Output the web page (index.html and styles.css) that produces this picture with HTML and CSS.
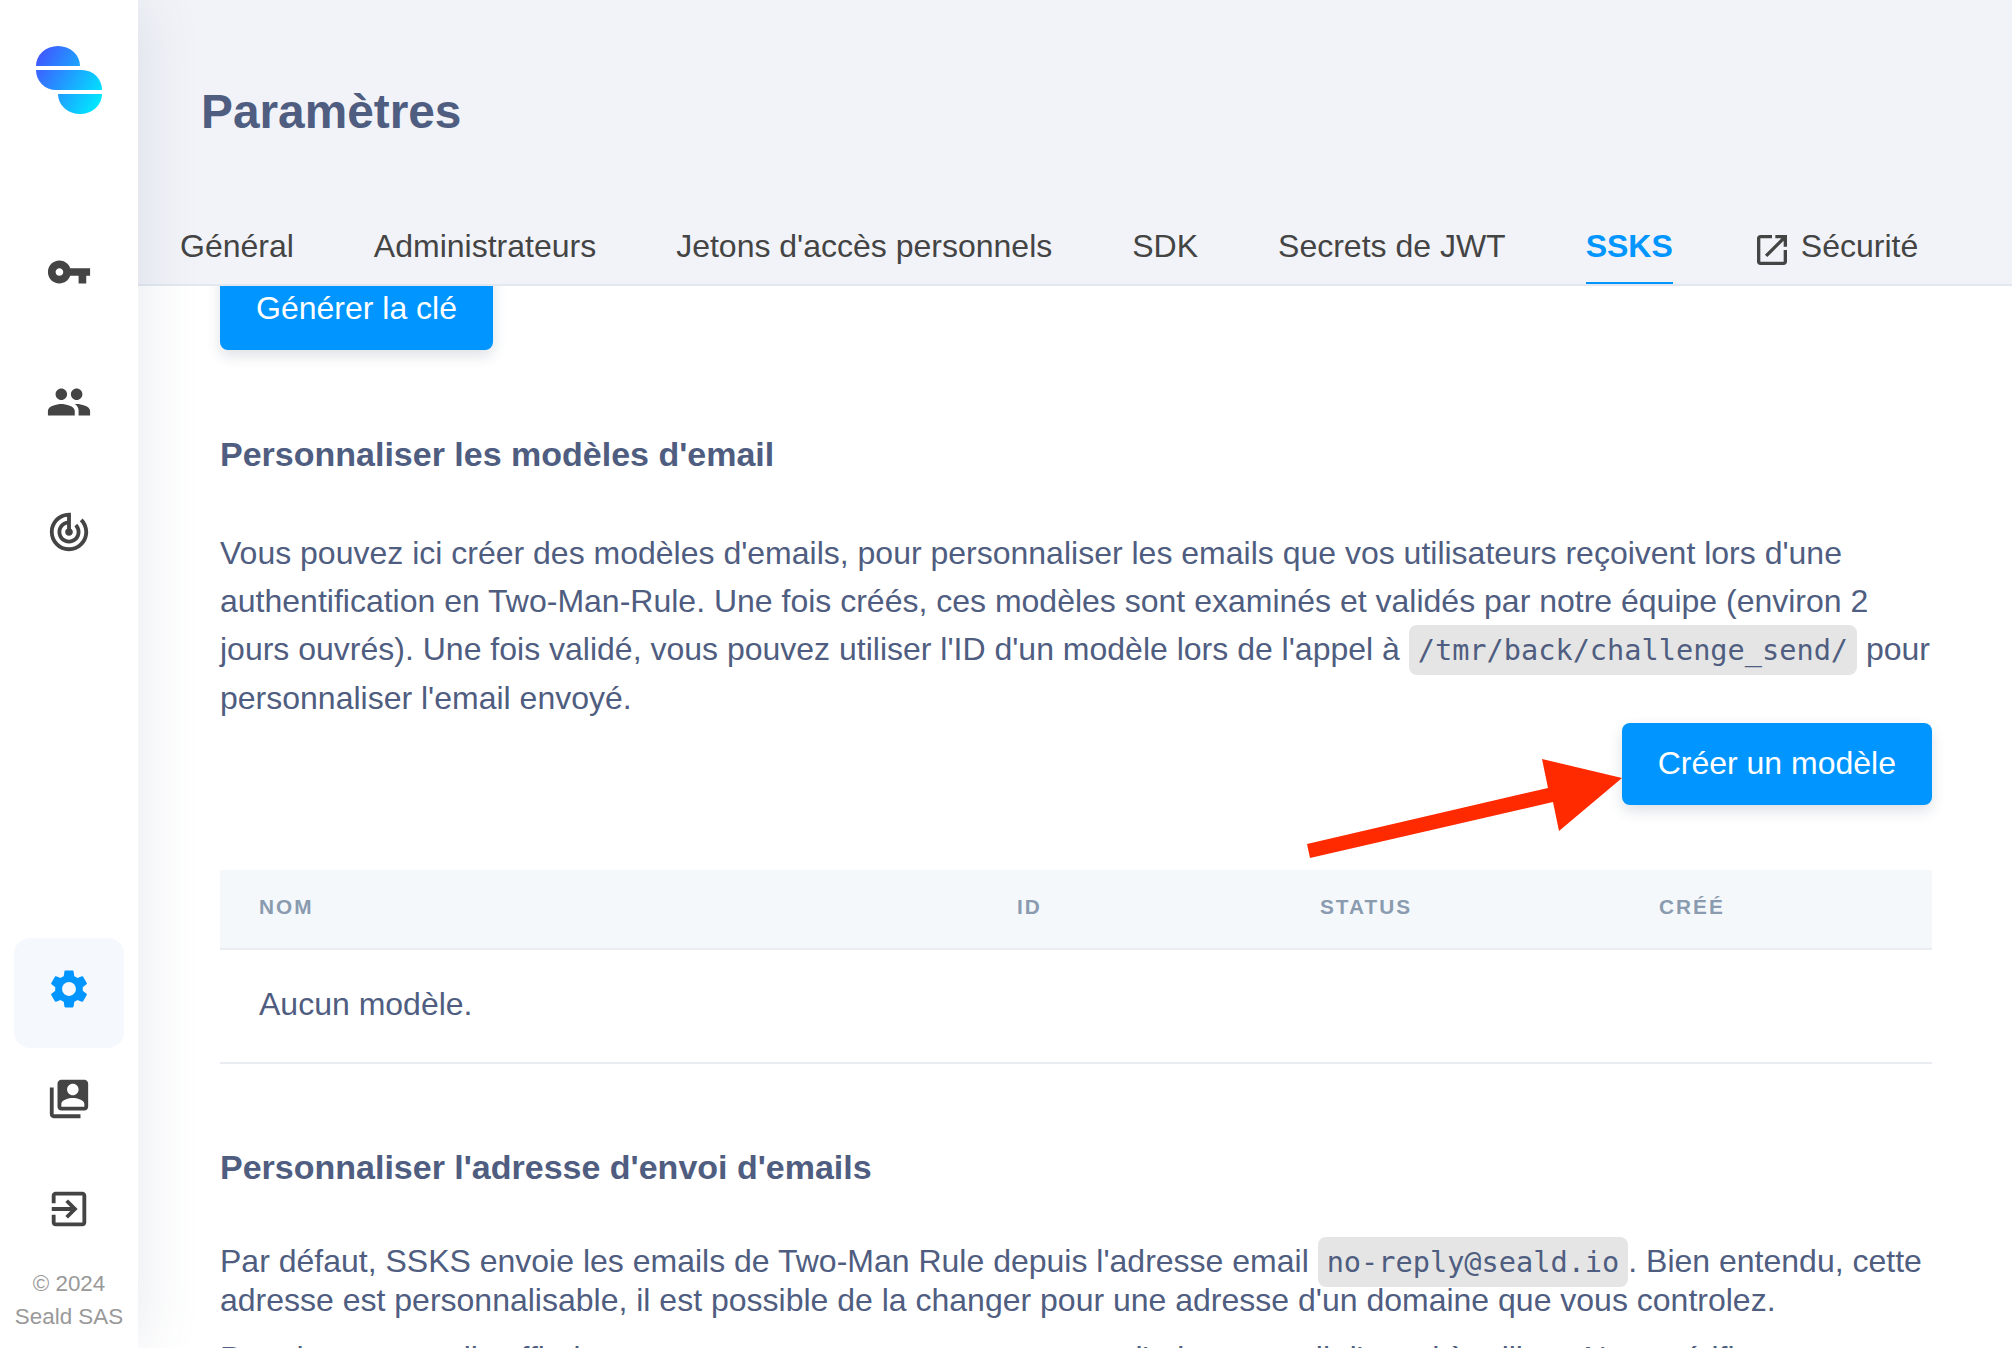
FILE: index.html
```html
<!DOCTYPE html>
<html lang="fr">
<head>
<meta charset="utf-8">
<title>Paramètres</title>
<link rel="stylesheet" href="styles.css">
</head>
<body>
<div class="app">
  <aside class="sidebar">
    <div class="logo">
      <svg width="66" height="68" viewBox="0 0 66 68">
        <defs>
          <linearGradient id="lg" gradientUnits="userSpaceOnUse" x1="0" y1="14" x2="66" y2="50">
            <stop offset="0" stop-color="#4058ff"/>
            <stop offset="0.5" stop-color="#1f9fff"/>
            <stop offset="1" stop-color="#00e6ff"/>
          </linearGradient>
        </defs>
        <path fill="url(#lg)" d="M0 20A22 20 0 0 1 44 20ZM0 24H46A20 20 0 0 1 66 44H20A20 20 0 0 1 0 24ZM22 48H66A22 20 0 0 1 22 48Z"/>
      </svg>
    </div>
    <nav class="nav nav-top">
      <a class="nav-item"><svg class="icon" viewBox="0 0 24 24"><path d="M12.65 10C11.83 7.67 9.61 6 7 6c-3.31 0-6 2.69-6 6s2.69 6 6 6c2.61 0 4.83-1.67 5.65-4H17v4h4v-4h2v-4H12.65zM7 14c-1.1 0-2-.9-2-2s.9-2 2-2 2 .9 2 2-.9 2-2 2z"/></svg></a>
      <a class="nav-item"><svg class="icon" viewBox="0 0 24 24"><path d="M16 11c1.66 0 2.99-1.34 2.99-3S17.66 5 16 5c-1.66 0-3 1.34-3 3s1.34 3 3 3zm-8 0c1.66 0 2.99-1.34 2.99-3S9.66 5 8 5C6.34 5 5 6.34 5 8s1.34 3 3 3zm0 2c-2.33 0-7 1.17-7 3.5V19h14v-2.5c0-2.33-4.67-3.5-7-3.5zm8 0c-.29 0-.62.02-.97.05 1.16.84 1.97 1.97 1.97 3.45V19h6v-2.5c0-2.33-4.67-3.5-7-3.5z"/></svg></a>
      <a class="nav-item"><svg class="icon" viewBox="0 0 24 24"><path d="M19.07 4.93l-1.41 1.41C19.1 7.79 20 9.79 20 12c0 4.42-3.58 8-8 8s-8-3.58-8-8c0-4.08 3.05-7.44 7-7.93v2.02C8.16 6.57 6 9.03 6 12c0 3.31 2.69 6 6 6s6-2.69 6-6c0-1.66-.67-3.16-1.76-4.24l-1.41 1.41C15.55 9.9 16 10.9 16 12c0 2.21-1.79 4-4 4s-4-1.79-4-4c0-1.86 1.28-3.41 3-3.86v2.14c-.6.35-1 .98-1 1.72 0 1.1.9 2 2 2s2-.9 2-2c0-.74-.4-1.38-1-1.72V2h-1C6.48 2 2 6.48 2 12s4.48 10 10 10 10-4.48 10-10c0-2.76-1.12-5.26-2.93-7.07z"/></svg></a>
    </nav>
    <nav class="nav nav-bottom">
      <a class="nav-item active"><svg class="icon" viewBox="0 0 24 24"><path d="M19.14,12.94c0.04-0.3,0.06-0.61,0.06-0.94c0-0.32-0.02-0.64-0.07-0.94l2.03-1.58c0.18-0.14,0.23-0.41,0.12-0.61 l-1.92-3.32c-0.12-0.22-0.37-0.29-0.59-0.22l-2.39,0.96c-0.5-0.38-1.03-0.7-1.62-0.94L14.4,2.81c-0.04-0.24-0.24-0.41-0.48-0.41 h-3.84c-0.24,0-0.43,0.17-0.47,0.41L9.25,5.35C8.66,5.59,8.12,5.92,7.63,6.29L5.24,5.33c-0.22-0.08-0.47,0-0.59,0.22L2.74,8.87 C2.62,9.08,2.66,9.34,2.86,9.48l2.03,1.58C4.84,11.36,4.8,11.69,4.8,12s0.02,0.64,0.07,0.94l-2.03,1.58 c-0.18,0.14-0.23,0.41-0.12,0.61l1.92,3.32c0.12,0.22,0.37,0.29,0.59,0.22l2.39-0.96c0.5,0.38,1.03,0.7,1.62,0.94l0.36,2.54 c0.05,0.24,0.24,0.41,0.48,0.41h3.84c0.24,0,0.44-0.17,0.47-0.41l0.36-2.54c0.59-0.24,1.13-0.56,1.62-0.94l2.39,0.96 c0.22,0.08,0.47,0,0.59-0.22l1.92-3.32c0.12-0.22,0.07-0.47-0.12-0.61L19.14,12.94z M12,15.6c-1.98,0-3.6-1.62-3.6-3.6 s1.62-3.6,3.6-3.6s3.6,1.62,3.6,3.6S13.98,15.6,12,15.6z"/></svg></a>
      <a class="nav-item"><svg class="icon" viewBox="0 0 24 24"><path fill-rule="evenodd" d="M4 6H2v14c0 1.1.9 2 2 2h14v-2H4V6zm16-4H8c-1.1 0-2 .9-2 2v12c0 1.1.9 2 2 2h12c1.1 0 2-.9 2-2V4c0-1.1-.9-2-2-2zm-6 2c1.66 0 3 1.34 3 3s-1.34 3-3 3-3-1.34-3-3 1.34-3 3-3zm6 12H8v-1.5c0-1.99 4-3 6-3s6 1.01 6 3V16z"/></svg></a>
      <a class="nav-item"><svg class="icon" viewBox="0 0 24 24"><path d="M10.09 15.59L11.5 17l5-5-5-5-1.41 1.41L12.67 11H3v2h9.67l-2.58 2.59zM19 3H5c-1.11 0-2 .9-2 2v4h2V5h14v14H5v-4H3v4c0 1.1.89 2 2 2h14c1.1 0 2-.9 2-2V5c0-1.1-.9-2-2-2z"/></svg></a>
    </nav>
    <div class="copyright">© 2024<br>Seald SAS</div>
  </aside>

  <main class="main">
    <header class="header">
      <h1 class="title">Paramètres</h1>
      <div class="tabs">
        <a class="tab">Général</a>
        <a class="tab">Administrateurs</a>
        <a class="tab">Jetons d'accès personnels</a>
        <a class="tab">SDK</a>
        <a class="tab">Secrets de JWT</a>
        <a class="tab tab-active">SSKS</a>
        <a class="tab tab-icon"><svg class="tab-svg" viewBox="0 0 24 24"><path d="M19 19H5V5h7V3H5c-1.11 0-2 .9-2 2v14c0 1.1.89 2 2 2h14c1.1 0 2-.9 2-2v-7h-2v7zM14 3v2h3.59l-9.83 9.83 1.41 1.41L19 6.41V10h2V3h-7z"/></svg>Sécurité</a>
      </div>
    </header>
    <div class="scroll">
      <div class="content">
        <button class="btn">Générer la clé</button>
        <h3 class="section-title first">Personnaliser les modèles d'email</h3>
        <p class="para">Vous pouvez ici créer des modèles d'emails, pour personnaliser les emails que vos utilisateurs reçoivent lors d'une authentification en Two-Man-Rule. Une fois créés, ces modèles sont examinés et validés par notre équipe (environ 2 jours ouvrés). Une fois validé, vous pouvez utiliser l'ID d'un modèle lors de l'appel à <code class="code">/tmr/back/challenge_send/</code> pour personnaliser l'email envoyé.</p>
        <div class="actions">
          <button class="btn">Créer un modèle</button>
          <svg class="arrow" width="320" height="104" viewBox="0 0 320 104"><polygon fill="#ff2a00" points="0,89 241,33 235,4 315,23 252,76 246,47 3,103"/></svg>
        </div>
        <table class="table">
          <colgroup><col class="c1"><col class="c2"><col class="c3"><col class="c4"></colgroup>
          <thead><tr><th>Nom</th><th>ID</th><th>Status</th><th>Créé</th></tr></thead>
          <tbody><tr><td colspan="4">Aucun modèle.</td></tr></tbody>
        </table>
        <h3 class="section-title second">Personnaliser l'adresse d'envoi d'emails</h3>
        <p class="para tight">Par défaut, SSKS envoie les emails de Two-Man Rule depuis l'adresse email <code class="code">no-reply@seald.io</code>. Bien entendu, cette adresse est personnalisable, il est possible de la changer pour une adresse d'un domaine que vous controlez.</p>
        <p class="para tight">Pour le moment, il suffit de nous contacter en nous transmettant l'adresse mail d'envoi à utiliser. Nous vérifierons</p>
      </div>
    </div>
  </main>
</div>
</body>
</html>
```

FILE: styles.css
```css
* { box-sizing: border-box; }
html, body { margin: 0; height: 100%; overflow: hidden; }
body { font-family: "Liberation Sans", Arial, sans-serif; background: #fff; }
.app { display: flex; height: 1348px; }

.sidebar {
  width: 138px;
  flex: none;
  display: flex;
  flex-direction: column;
  align-items: center;
  background: #fff;
  box-shadow: 0 0 64px rgba(80, 95, 130, 0.14);
  position: relative;
  z-index: 3;
}
.logo { height: 221px; padding-top: 46px; }
.logo svg { display: block; }
.nav { display: flex; flex-direction: column; width: 110px; }
.nav-top { gap: 20px; }
.nav-bottom { margin-top: auto; }
.nav-item {
  height: 110px;
  display: flex;
  align-items: center;
  justify-content: center;
  padding-bottom: 8px;
  border-radius: 16px;
}
.nav-item.active { background: #f5f8fc; }
.icon { width: 46px; height: 46px; fill: #444; display: block; }
.active .icon { fill: #0095ff; }
.copyright {
  margin-top: -1px;
  padding: 0 0 15px;
  font-size: 22.4px;
  line-height: 33px;
  color: #999;
  text-align: center;
  white-space: nowrap;
}

.main { flex: 1; min-width: 0; display: flex; flex-direction: column; }
.header {
  height: 286px;
  flex: none;
  background: #f1f3f8;
  border-bottom: 2px solid #e3e8f0;
  padding: 0 42px;
  position: relative;
  z-index: 2;
}
.title {
  margin: 0;
  padding: 84px 0 0 21px;
  height: 224px;
  font-size: 47.8px;
  line-height: 56px;
  font-weight: 700;
  color: #4f5d80;
}
.tabs { display: flex; gap: 80px; }
.tab {
  display: flex;
  align-items: center;
  height: 60px;
  padding-bottom: 16px;
  font-size: 32px;
  color: #444;
  white-space: nowrap;
}
.tab-active { color: #0095ff; font-weight: 700; border-bottom: 2px solid #0095ff; padding-bottom: 14px; }
.tab-svg { width: 40px; height: 40px; fill: #444; margin-right: 9px; margin-left: -1px; position: relative; top: 4px; }

.scroll { flex: 1; min-height: 0; overflow: hidden; }
.content { padding: 0 80px 0 82px; margin-top: -18px; }
.btn {
  display: block;
  height: 82px;
  padding: 0 36px 2px;
  border: 0;
  border-radius: 8px;
  background: #0095ff;
  color: #fff;
  font: 32px "Liberation Sans", Arial, sans-serif;
  box-shadow: 0 6px 14px rgba(50, 70, 100, 0.16);
}
.section-title {
  margin: 0;
  font-size: 34px;
  line-height: 40px;
  font-weight: 700;
  color: #4f5d80;
}
.section-title.first { padding-top: 84px; }
.section-title.second { padding-top: 83px; }
.para {
  margin: 55px 0 0;
  font-size: 32px;
  line-height: 48px;
  color: #4f5d80;
}
.para.tight { line-height: 38.4px; }
.section-title + .para.tight { margin-top: 55px; }
.para.tight + .para.tight { margin-top: 19px; }
.code {
  font-family: "DejaVu Sans Mono", monospace;
  font-size: 28.6px;
  background: #e5e5e5;
  border-radius: 8px;
  padding: 8px 9px;
}
.actions {
  position: relative;
  display: flex;
  justify-content: flex-end;
  margin-top: 1px;
}
.arrow { position: absolute; left: 1087px; top: 32px; }

.table { width: 100%; table-layout: fixed; border-collapse: collapse; margin-top: 65px; }
.c1 { width: 758px; } .c2 { width: 303px; } .c3 { width: 339px; } .c4 { width: 312px; }
.table th {
  height: 79px;
  padding: 0 39px 4px;
  text-align: left;
  background: #f5f8fb;
  border-bottom: 2px solid #e9ecf0;
  font-size: 20.8px;
  font-weight: 700;
  letter-spacing: 2px;
  text-transform: uppercase;
  color: #8a9bb0;
}
.table td {
  height: 114px;
  padding: 0 39px 3px;
  font-size: 32px;
  color: #4f5d80;
  border-bottom: 2px solid #e9ecf0;
}
```
